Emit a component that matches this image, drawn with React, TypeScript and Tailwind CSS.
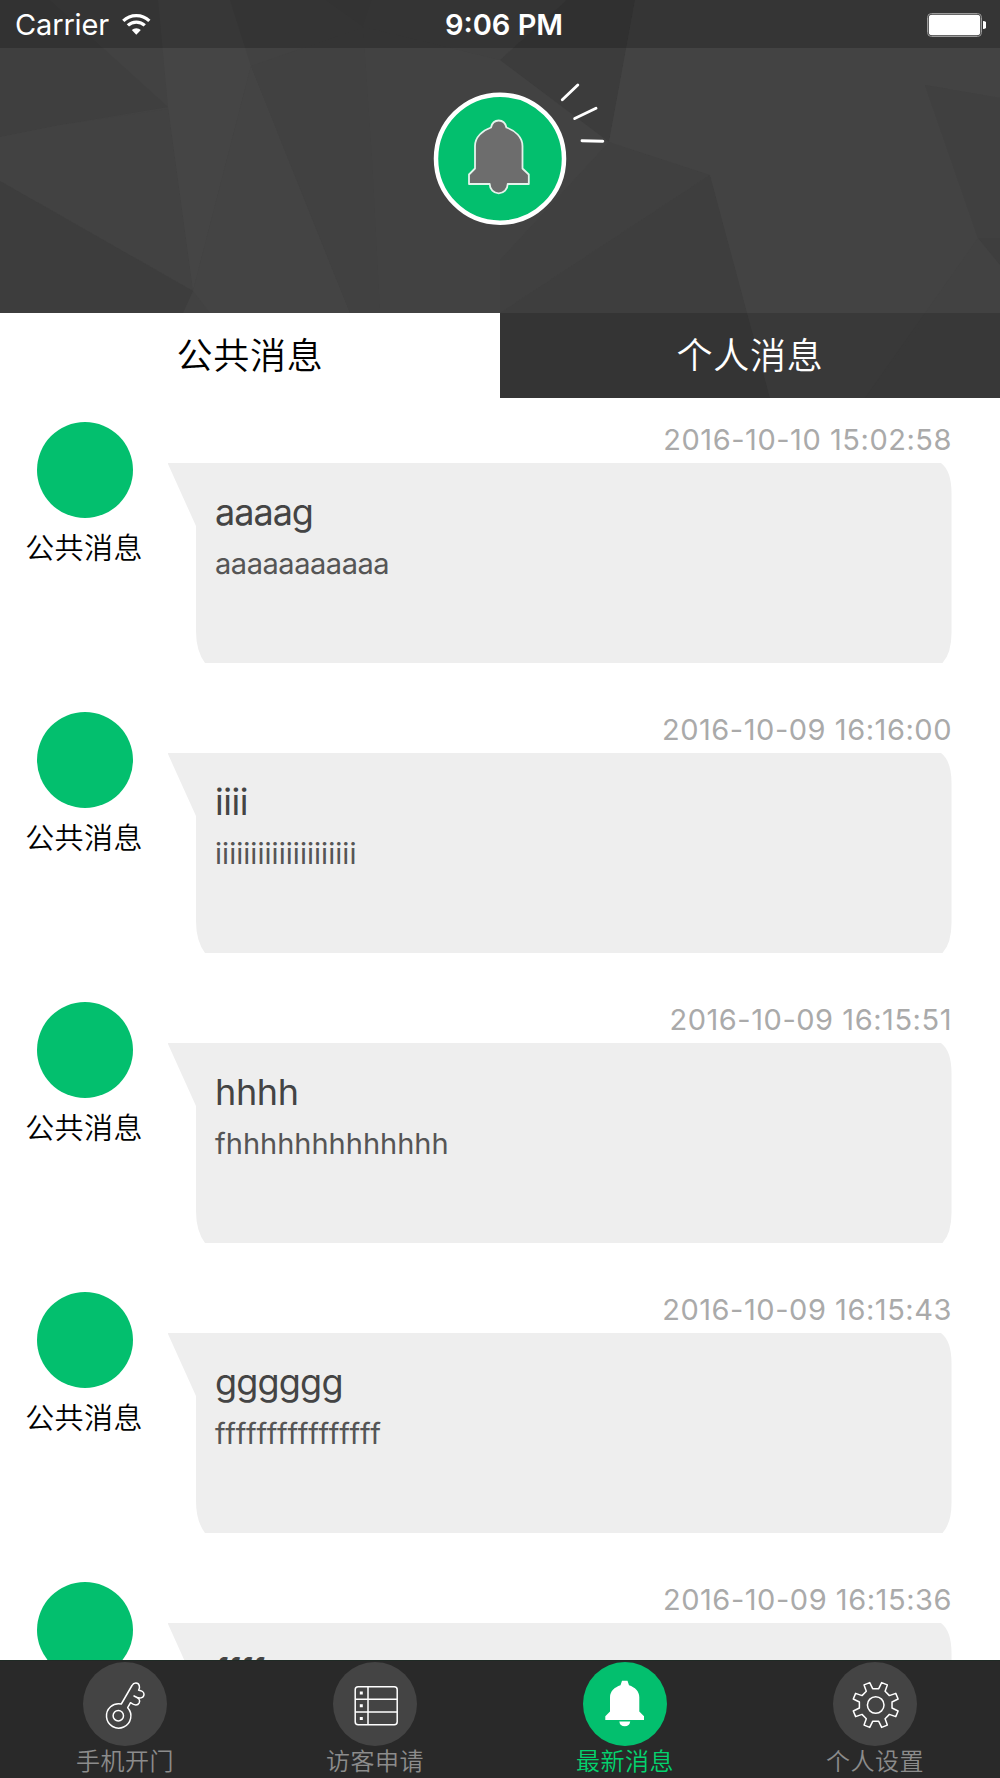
import type { ReactNode } from 'react'

interface Message {
  time: string
  title: string
  content: string
  titleClass: string
  contentClass: string
}

const messages: Message[] = [
  { time: '2016-10-10 15:02:58', title: 'aaaag', content: 'aaaaaaaaaaa', titleClass: 'tracking-[-1px]', contentClass: 'tracking-[-0.45px]' },
  { time: '2016-10-09 16:16:00', title: 'iiii', content: 'iiiiiiiiiiiiiiiiiiii', titleClass: 'tracking-[-0.5px]', contentClass: 'tracking-[0.05px]' },
  { time: '2016-10-09 16:15:51', title: 'hhhh', content: 'fhhhhhhhhhhhhh', titleClass: 'tracking-[-0.4px]', contentClass: 'tracking-[0px]' },
  { time: '2016-10-09 16:15:43', title: 'gggggg', content: 'ffffffffffffffff', titleClass: 'tracking-[-0.8px]', contentClass: 'tracking-[0.75px]' },
  { time: '2016-10-09 16:15:36', title: 'ffff', content: '', titleClass: 'tracking-[0.3px]', contentClass: '' }
]

// 齿轮轮廓：8 个齿
const gearPoints = Array.from({ length: 8 }, (_, i) => {
  const mid = i * 45 + 22.5
  return [
    [mid - 12, 16.6],
    [mid - 7.6, 23.2],
    [mid + 7.6, 23.2],
    [mid + 12, 16.6]
  ].map(([deg, r]) => {
    const a = (deg * Math.PI) / 180
    return `${(42.7 + r * Math.sin(a)).toFixed(2)},${(43 - r * Math.cos(a)).toFixed(2)}`
  }).join(' ')
}).join(' ')

function HeaderBackground() {
  return (
    <svg className="absolute inset-0" width="1000" height="398" viewBox="0 0 1000 398">
      <rect width="1000" height="398" fill="#424242" />
      <polygon points="0,0 50,0 168,107 60,125 0,137" fill="#3f3f3f" />
      <polygon points="0,137 60,125 168,109 193,291 0,181" fill="#424242" />
      <polygon points="0,181 193,291 183,313 0,313" fill="#3d3d3d" />
      <polygon points="158,0 230,0 251,66 193,291 168,107" fill="#454545" />
      <polygon points="251,66 193,291 210,313 350,313" fill="#444444" />
      <polygon points="251,66 363,27 372,160 380,313 350,313" fill="#414141" />
      <polygon points="325,0 372,0 363,27" fill="#404040" />
      <polygon points="390,0 567,0 500,60 363,27" fill="#414141" />
      <polygon points="500,60 567,0 635,0 609,142" fill="#3c3c3c" />
      <polygon points="609,142 500,260 500,313 710,175" fill="#404040" />
      <polygon points="710,175 500,313 500,398 770,398" fill="#3e3e3e" />
      <polygon points="635,0 1000,0 1000,98 925,85 978,238 925,313 865,398 770,398 710,175 609,142" fill="#434343" />
      <polygon points="925,85 1000,98 1000,238 978,238" fill="#404040" />
      <polygon points="978,238 1000,238 1000,265" fill="#3e3e3e" />
      <polygon points="925,320 1000,385 1000,398 865,398" fill="#424242" />
    </svg>
  )
}

function StatusBar() {
  return (
    <div className="relative flex h-12 items-center justify-between bg-black/20 pl-[15px] pr-3.5 text-white">
      <div className="flex items-center gap-3">
        <span className="pt-0.5 text-[29px] leading-[50px] tracking-[-0.15px]">Carrier</span>
        <svg width="31" height="23" viewBox="0 0 32 24" fill="none" stroke="#fff" strokeWidth="3.4">
          <path d="M2.2 8.2a19.4 19.4 0 0 1 27.2 0" />
          <path d="M7 13a12.6 12.6 0 0 1 17.600 0" />
          <path d="M15.800 22.600l-4.700-4.800a6.600 6.600 0 0 1 9.400 0z" fill="#fff" stroke="none" />
        </svg>
      </div>
      <span className="absolute left-[504px] -translate-x-1/2 pt-0.5 text-[29px] font-semibold leading-[50px]">
        9:06 PM
      </span>
      <svg width="60" height="25" viewBox="0 0 60 25">
        <rect x="1.500" y="1.500" width="54" height="23" rx="4" fill="none" stroke="#9a9a9a" strokeWidth="1" />
        <rect x="2.800" y="2.800" width="51.400" height="20.400" rx="3" fill="#fff" />
        <path d="M57 9a4 4 0 0 1 0 8z" fill="#fff" />
      </svg>
    </div>
  )
}

function HeaderBell() {
  return (
    <svg width="220" height="170" viewBox="-30 0 220 170" fill="none">
      <circle cx="80" cy="88.700" r="64" fill="#03BF6E" stroke="#fff" strokeWidth="4.500" />
      <path
        d="M71 57.500C72 53 75 50.500 78.700 50.500s6.700 2.500 7.700 7C95 60.500 102.500 67 102.500 76v22.500l6.300 6V114H87.700a9 9.300 0 0 1-18 0H49v-9.500l6-6V76c0-9 7.500-15.500 16-18.500z"
        fill="#6D6D6D"
        stroke="#E3F3EB"
        strokeWidth="1.800"
        strokeLinejoin="round"
      />
      <path d="M142.300 29.800 157.800 15M154.700 48.500l21.300-10.200M162 70.800l20.800.5" stroke="#fff" strokeWidth="2.900" strokeLinecap="round" />
    </svg>
  )
}

function MessageItem({ message }: { message: Message }) {
  return (
    <div className="flex h-[289.9px] pt-6">
      <div className="flex w-[168px] shrink-0 flex-col items-center">
        <div className="ml-[2px] size-24 rounded-full bg-[#03BF6E]" />
        <span className="mt-[13px] text-[29px] font-[350] leading-9 tracking-[0.4px] text-black">公共消息</span>
      </div>
      <div className="w-[784px]">
        <div className="text-right text-[29px] leading-[35px] tracking-[0.54px] text-[#AAAAAA]">{message.time}</div>
        <div className="relative mt-1.5 h-[200px] pl-[47px] pt-[27px]">
          <svg className="absolute inset-0" width="784" height="200" viewBox="0 0 784 200">
            <path d="M-.5 0H773Q783.500 8 783.500 30V170Q783.500 190 774.500 200H37Q28 188 28 168V63z" fill="#EEEEEE" />
          </svg>
          <div className={`relative h-11 text-[36px] leading-[45px] text-[#444444] ${message.titleClass}`}>{message.title}</div>
          <div className={`relative mt-3 text-[29px] leading-9 text-[#555555] ${message.contentClass}`}>{message.content}</div>
        </div>
      </div>
    </div>
  )
}

function TabItem({ label, active, children }: { label: string; active?: boolean; children: ReactNode }) {
  return (
    <div className="flex flex-1 flex-col items-center pt-px">
      <div className={`size-[84.5px] rounded-full ${active ? 'bg-[#03BF6E]' : 'bg-[#444444]'}`}>
        <svg width="84" height="84" viewBox="0 0 84 84" fill="none" stroke="#fff" strokeWidth="1.500" strokeLinejoin="round">
          {children}
        </svg>
      </div>
      <span className={`pt-px text-[24px] font-[350] leading-[30px] tracking-[0.5px] ${active ? 'text-[#03D26E]' : 'text-[#8c8c8c]'}`}>
        {label}
      </span>
    </div>
  )
}

export default function App() {
  return (
    <div className="flex h-[1778px] w-[1000px] flex-col overflow-hidden bg-white font-['Inter','Noto_Sans_CJK_SC',sans-serif]">
      <header className="relative flex h-[398px] shrink-0 flex-col">
        <HeaderBackground />
        <StatusBar />
        <div className="relative flex h-[265px] justify-center pt-[22px]">
          <HeaderBell />
        </div>
        {/* 消息分类 */}
        <div className="relative grid flex-1 grid-cols-2 text-center text-[36px] font-[350] leading-[86px] tracking-[0.8px]">
          <div className="h-[85px] bg-white text-black">公共消息</div>
          <div className="h-[85px] bg-black/15 text-white">个人消息</div>
        </div>
      </header>

      {/* 消息列表 */}
      <main className="min-h-0 flex-1 overflow-hidden">
        {messages.map((message) => (
          <MessageItem key={message.time} message={message} />
        ))}
      </main>

      {/* 底部导航 */}
      <nav className="flex h-[118.500px] shrink-0 border-t border-[#1f2a25] bg-[#292929]">
        <TabItem label="手机开门">
          <circle cx="35.300" cy="53.700" r="5.200" />
          <path d="M38.300 42 49 23.500c1.800-3.400 6.300-3.200 7.300.2.500 1.600.2 3-.7 4.500 3 .3 5.600 2 5.400 4.300-.3 3.500-4 5-10 1.500 5 2 6.500 4 5.200 6.800-1.500 3-4.500 3-8.700-.1l-2.800 5A12.200 12.200 0 1 1 38.300 42z" />
        </TabItem>
        <TabItem label="访客申请">
          <rect x="22.200" y="24.700" width="42" height="38" rx="3" />
          <path d="M35 24.700v38M22.200 37.300h42M22.200 50h42" />
          <path d="M26.800 29.500h3v3h-3zM26.800 42.300h3v3h-3zM26.800 55h3v3h-3z" fill="#fff" stroke="none" />
        </TabItem>
        <TabItem label="最新消息" active>
          <path
            d="M39 18.700h5.500l1.500 4.600c6 2 10.300 6 10.300 12v14.200l4.700 4.700V58H22.300v-3.800l4.700-4.700V35.300c0-6 4.500-10 10.500-12zM36.300 59.500h10.900a5.500 5.500 0 0 1-10.900 0z"
            fill="#fff"
            stroke="none"
          />
        </TabItem>
        <TabItem label="个人设置">
          <circle cx="42.700" cy="43" r="8.300" />
          <polygon points={gearPoints} />
        </TabItem>
      </nav>
    </div>
  )
}
